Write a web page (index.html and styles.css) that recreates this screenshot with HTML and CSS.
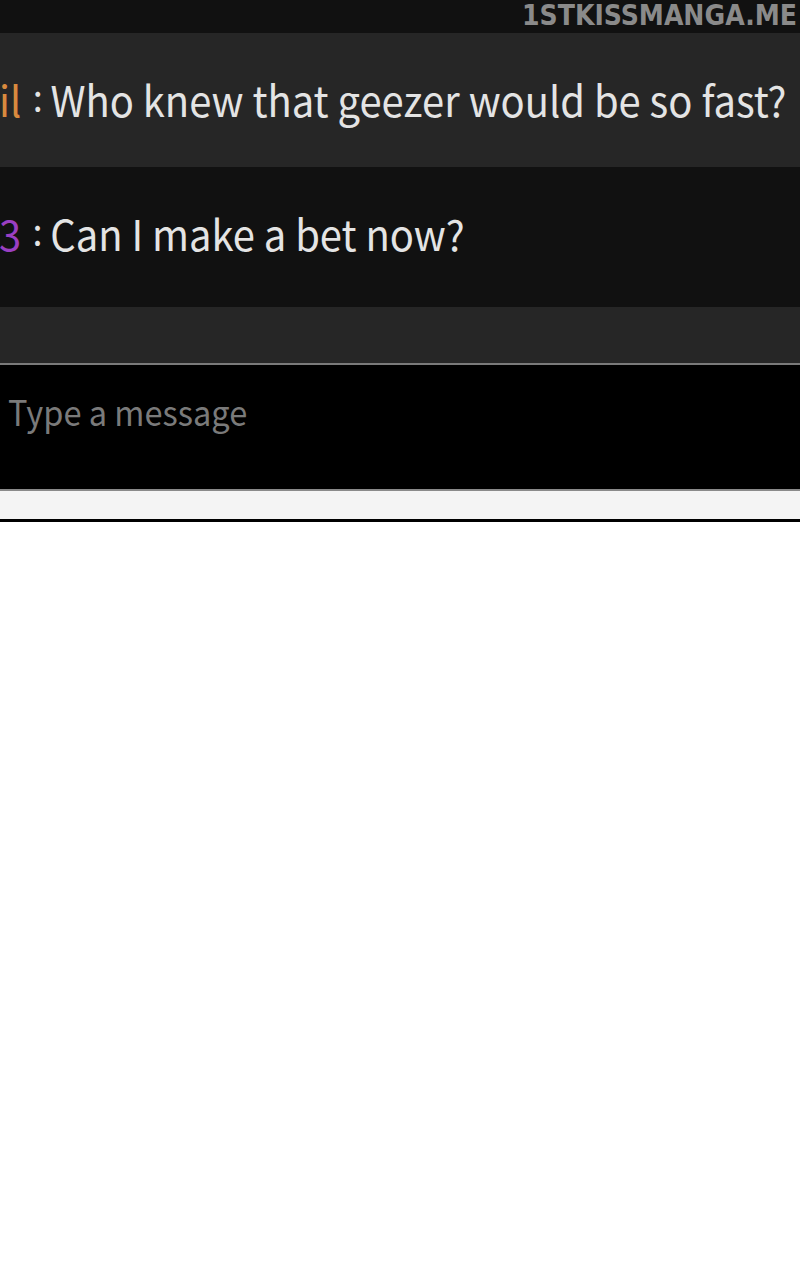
FILE: index.html
```html
<!DOCTYPE html>
<html>
<head>
<meta charset="utf-8">
<link rel="stylesheet" href="styles.css">
</head>
<body>
<div class="panel">
  <div class="topbar"><span class="mark">1STKISSMANGA.ME</span></div>
  <div class="msg msg-light">
    <div class="line"><span class="name orange">il</span><span class="colon">:</span><span class="text">Who knew that geezer would be so fast?</span></div>
  </div>
  <div class="msg msg-dark">
    <div class="line"><span class="name purple">3</span><span class="colon">:</span><span class="text">Can I make a bet now?</span></div>
  </div>
  <div class="spacer"></div>
  <div class="input"><span class="placeholder">Type a message</span></div>
  <div class="footer"></div>
</div>
</body>
</html>
```
FILE: styles.css
```css
html, body {
  margin: 0;
  padding: 0;
  background: #ffffff;
}
.panel {
  width: 800px;
  font-family: "Noto Sans CJK SC", "Noto Sans", sans-serif;
}
.topbar {
  height: 33px;
  background: #111111;
  display: flex;
  justify-content: flex-end;
  align-items: center;
  padding-right: 3px;
}
.mark {
  font-family: "DejaVu Sans", sans-serif;
  font-stretch: condensed;
  font-weight: bold;
  font-size: 28px;
  color: #8a8a8a;
  line-height: 1;
  margin-bottom: 2px;
}
.msg {
  display: flex;
  align-items: center;
  color: #e4e4e4;
  font-size: 42px;
  white-space: nowrap;
}
.line {
  transform: scaleX(0.95);
  transform-origin: left center;
}
.msg-light {
  height: 134px;
  background: #262626;
  box-sizing: border-box;
  padding-bottom: 4px;
}
.msg-dark {
  height: 140px;
  background: #111111;
  box-sizing: border-box;
  padding-bottom: 10px;
}
.name {
  margin-left: -1px;
}
.orange { color: #d98a3e; }
.purple { color: #9a3fc2; }
.colon {
  display: inline-block;
  margin: 0 8px 0 12px;
  color: #e4e4e4;
  font-size: 38px;
  vertical-align: 5px;
}
.spacer {
  height: 56px;
  background: #262626;
  border-bottom: 2px solid #7a7a7a;
}
.input {
  background: #000000;
  color: #7a7a7a;
  font-size: 35px;
  padding-left: 8px;
  line-height: 92px;
  border-bottom: 2px solid #8a8a8a;
  box-sizing: border-box;
  height: 126px;
}
.placeholder {
  display: inline-block;
  transform: scaleX(0.93);
  transform-origin: left center;
}
.footer {
  height: 28px;
  background: #f4f4f4;
  border-bottom: 3px solid #000000;
}
```
